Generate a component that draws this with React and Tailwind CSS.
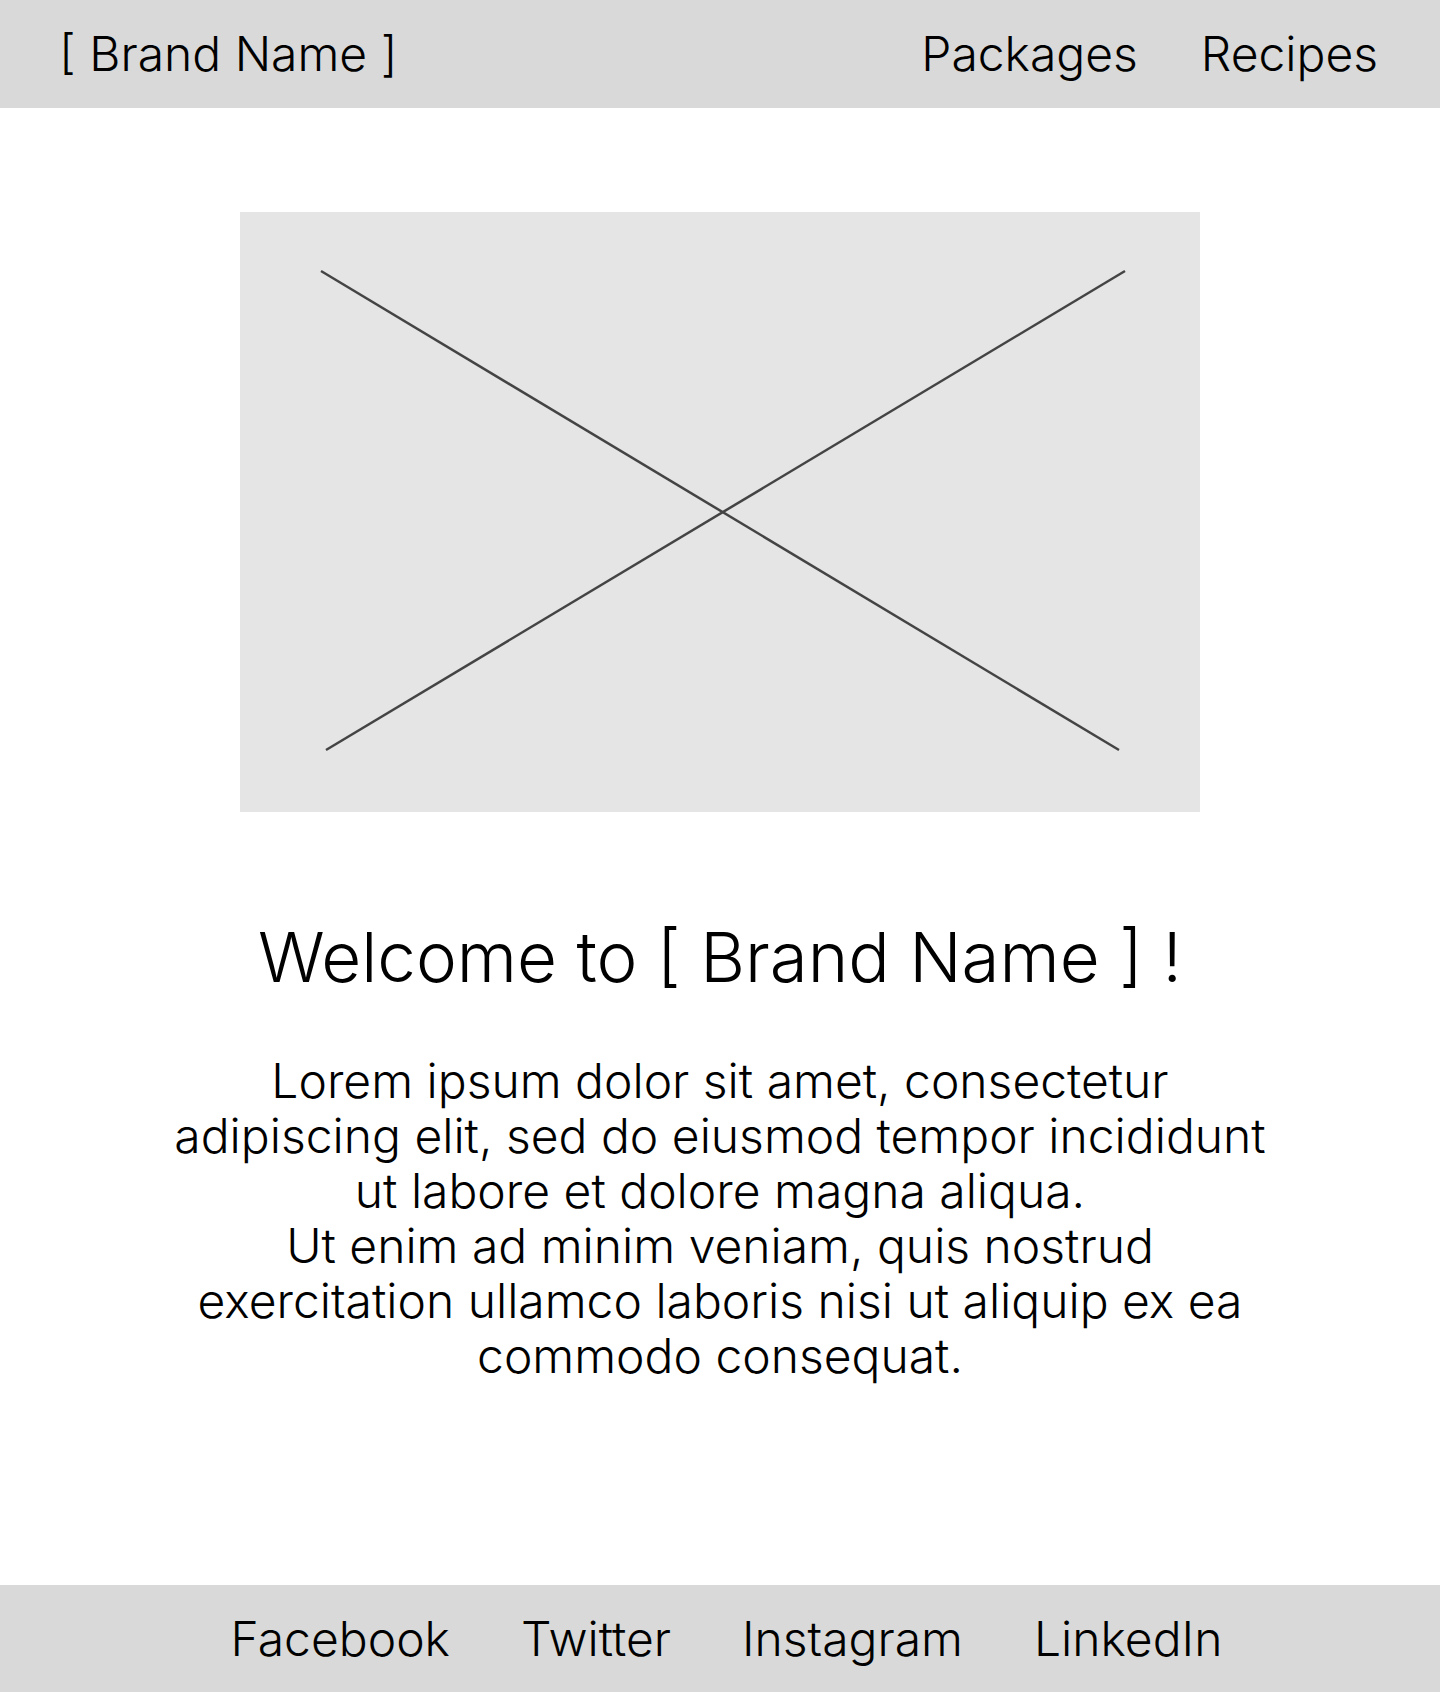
import React from 'react';

const font = { fontFamily: 'Inter, "Noto Sans", sans-serif' };

export default function App() {
  return (
    <div className="min-h-screen flex flex-col bg-white text-black font-light" style={font}>
      <header className="h-[108px] bg-[#d9d9d9] flex items-center justify-between pl-[59px] pr-[62px]">
        <span className="text-[48px] leading-none">[ Brand Name ]</span>
        <nav className="flex items-center gap-[63px] text-[48px] leading-none">
          <a href="#">Packages</a>
          <a href="#">Recipes</a>
        </nav>
      </header>

      <main className="flex-1 flex flex-col items-center pt-[104px]">
        {/* Placeholder image */}
        <div className="w-[960px] h-[600px] bg-[#e5e5e5]">
          <svg width="960" height="600" viewBox="0 0 960 600">
            <line x1="81" y1="59" x2="879" y2="538" stroke="#444" strokeWidth="2.5" />
            <line x1="885" y1="59" x2="86" y2="538" stroke="#444" strokeWidth="2.5" />
          </svg>
        </div>

        <h1 className="mt-[111px] text-[69px] leading-none text-center whitespace-nowrap">Welcome to [ Brand Name ] !</h1>

        <p className="mt-[61px] text-[48px] leading-[55px] text-center whitespace-nowrap">
          Lorem ipsum dolor sit amet, consectetur<br />
          adipiscing elit, sed do eiusmod tempor incididunt<br />
          ut labore et dolore magna aliqua.<br />
          Ut enim ad minim veniam, quis nostrud<br />
          exercitation ullamco laboris nisi ut aliquip ex ea<br />
          commodo consequat.
        </p>
      </main>

      <footer className="h-[107px] bg-[#d9d9d9] flex items-center justify-center gap-[71px] text-[48px] leading-none pl-[13px]">
        <a href="#">Facebook</a>
        <a href="#">Twitter</a>
        <a href="#">Instagram</a>
        <a href="#">LinkedIn</a>
      </footer>
    </div>
  );
}
